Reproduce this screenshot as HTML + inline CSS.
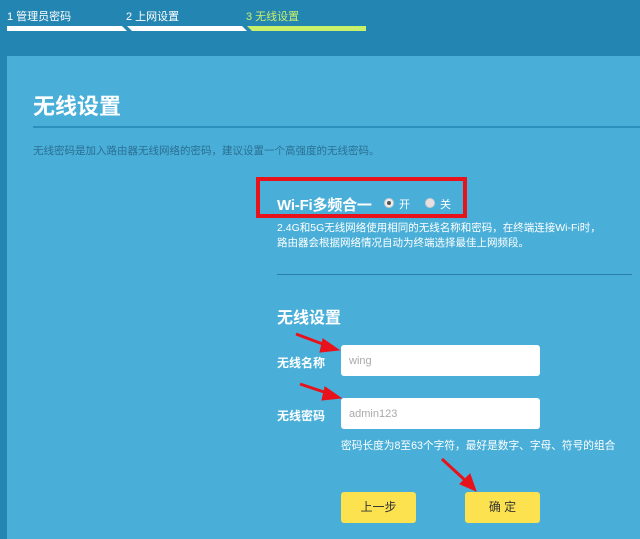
<!DOCTYPE html>
<html><head><meta charset="utf-8"><style>
*{margin:0;padding:0;box-sizing:border-box}
body{width:640px;height:539px;overflow:hidden;background:#2385b2;font-family:"Liberation Sans","Noto Sans CJK SC",sans-serif;position:relative;color:#fff}
.a{position:absolute;white-space:nowrap}
.panel{position:absolute;left:7px;top:56px;right:0;bottom:0;background:#4aafd8}
.inp{position:absolute;background:#fff;border-radius:3px;width:199px;height:31px;left:341px;color:#aaa;font-size:11px;padding:10px 0 0 8px}
.btn{position:absolute;top:492px;width:75px;height:31px;background:#fde24f;border-radius:3px;color:#333;font-size:12px;text-align:center;line-height:31px}
.rad{position:absolute;width:10px;height:10px;border-radius:50%;background:#eee;border:1px solid #ccc}
</style></head><body>
<div class="a" style="left:7px;top:8px;font-size:11px">1 管理员密码</div>
<div class="a" style="left:126px;top:8px;font-size:11px">2 上网设置</div>
<div class="a" style="left:246px;top:8px;font-size:11px;color:#c8f06a">3 无线设置</div>
<svg class="a" style="left:0;top:0" width="640" height="40">
<polygon points="7,26 122,26 127,31 7,31" fill="#fff"/>
<polygon points="127,26 242,26 247,31 132,31" fill="#fff"/>
<polygon points="247,26 366,26 366,31 252,31" fill="#c8f06a"/>
</svg>
<div class="panel"></div>
<div class="a" style="left:33px;top:89px;font-size:22px;font-weight:bold">无线设置</div>
<div class="a" style="left:33px;top:126px;right:0;height:2px;background:#2d8fbd"></div>
<div class="a" style="left:33px;top:143px;font-size:10.5px;color:#2a6f93">无线密码是加入路由器无线网络的密码，建议设置一个高强度的无线密码。</div>
<div class="a" style="left:256px;top:177px;width:211px;height:41px;border:4px solid #e8121a"></div>
<div class="a" style="left:277px;top:194px;font-size:15px;font-weight:bold;letter-spacing:-0.2px">Wi-Fi多频合一</div>
<div class="rad" style="left:384px;top:198px;background:#eee"><div style="width:4px;height:4px;border-radius:50%;background:#555;margin:2px"></div></div>
<div class="a" style="left:399px;top:196px;font-size:11px">开</div>
<div class="rad" style="left:425px;top:198px;background:#e8e0e0"></div>
<div class="a" style="left:440px;top:196px;font-size:11px">关</div>
<div class="a" style="left:277px;top:221px;font-size:10.5px;line-height:15px">2.4G和5G无线网络使用相同的无线名称和密码，在终端连接Wi-Fi时，<br>路由器会根据网络情况自动为终端选择最佳上网频段。</div>
<div class="a" style="left:277px;top:274px;width:355px;height:1px;background:#2a7fa8"></div>
<div class="a" style="left:277px;top:304px;font-size:16px;font-weight:bold">无线设置</div>
<div class="a" style="left:277px;top:354px;font-size:12px;font-weight:bold">无线名称</div>
<div class="inp" style="top:345px">wing</div>
<div class="a" style="left:277px;top:407px;font-size:12px;font-weight:bold">无线密码</div>
<div class="inp" style="top:398px">admin123</div>
<div class="a" style="left:341px;top:438px;font-size:10.7px">密码长度为8至63个字符，最好是数字、字母、符号的组合</div>
<div class="btn" style="left:341px">上一步</div>
<div class="btn" style="left:465px">确 定</div>
<svg class="a" style="left:0;top:0" width="640" height="539">
<g stroke="#e8121a" stroke-width="3" fill="#e8121a">
<line x1="296" y1="334" x2="328" y2="346"/><polygon points="339,350 323,339 320,352" stroke-width="1"/>
<line x1="300" y1="384" x2="330" y2="394"/><polygon points="341,398 325,387 322,400" stroke-width="1"/>
<line x1="442" y1="459" x2="467" y2="482"/><polygon points="476,491 470,474 460,484" stroke-width="1"/>
</g></svg>
</body></html>
